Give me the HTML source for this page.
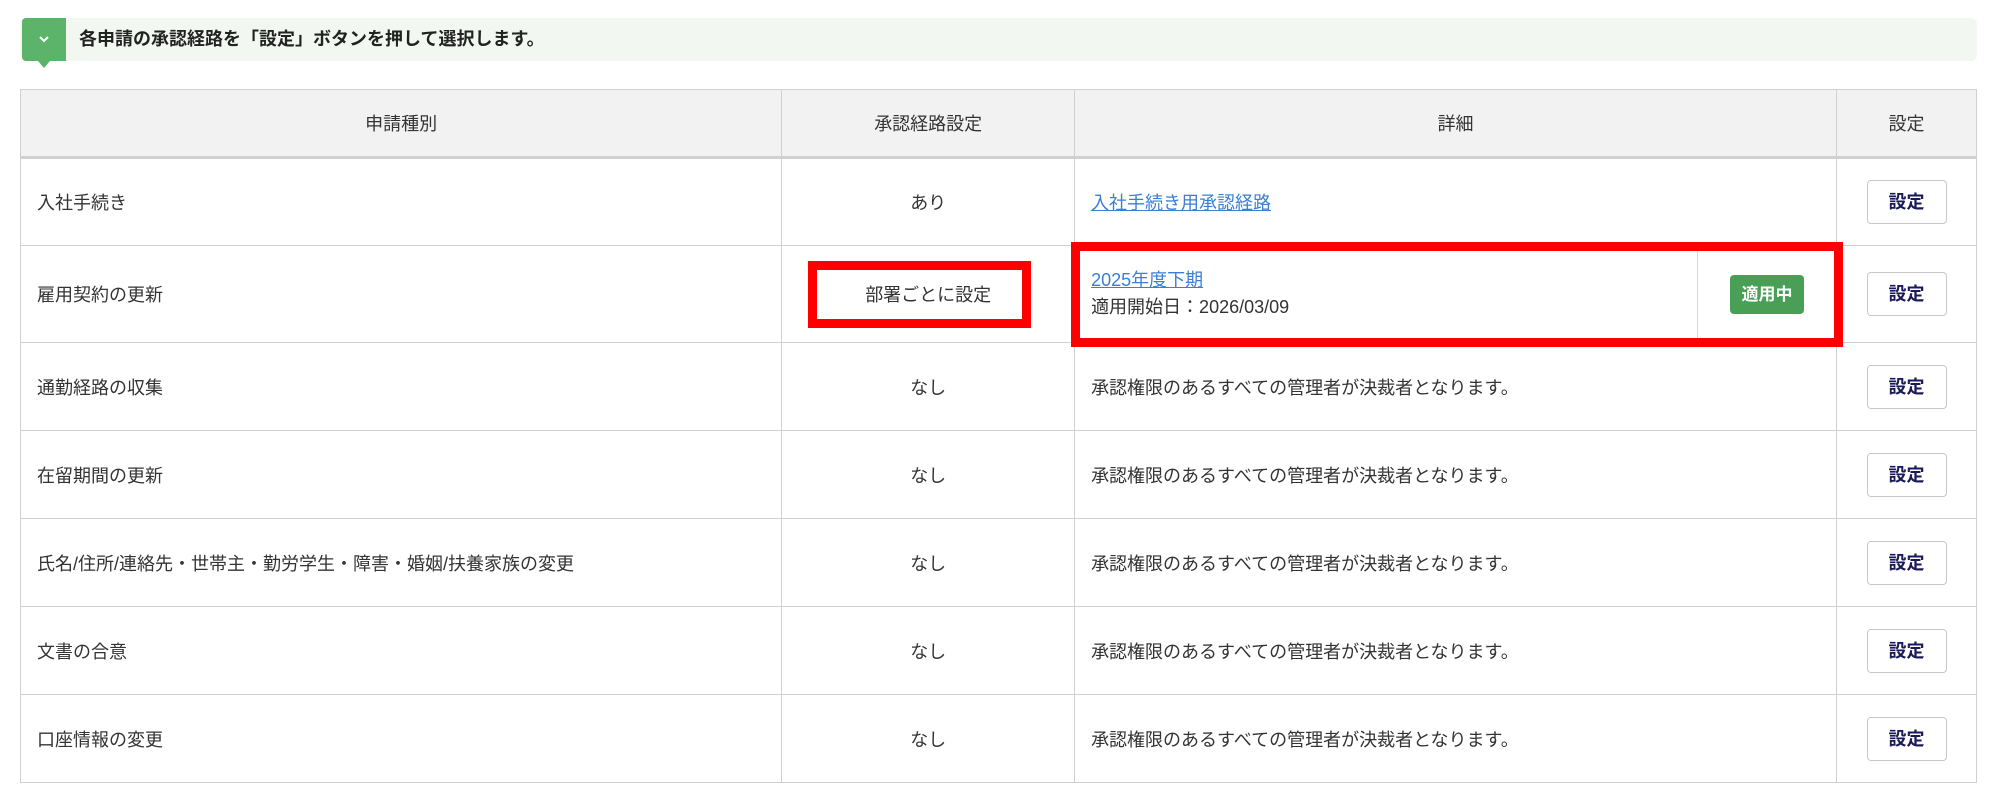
<!DOCTYPE html>
<html><head><meta charset="utf-8"><style>
*{box-sizing:border-box;margin:0;padding:0}
body{width:2000px;height:797px;background:#fff;font-family:"Liberation Sans","Noto Sans CJK JP",sans-serif;color:#333;position:relative;overflow:hidden}
.banner{position:absolute;left:20px;top:18px;width:1957px;height:43px;background:#f2f8f1;border-radius:6px}
.tab{position:absolute;left:22px;top:18px;width:44px;height:43px;background:#5cb36a;border-radius:4px 0 0 4px}
.tab:after{content:"";position:absolute;left:16px;top:43px;border-left:6px solid transparent;border-right:6px solid transparent;border-top:7px solid #5cb36a}
.tab svg{position:absolute;left:16px;top:16px}
.btitle{position:absolute;left:79px;top:18px;line-height:43px;font-size:18px;font-weight:bold;color:#222}
table{position:absolute;left:20px;top:89px;width:1957px;border-collapse:collapse;font-size:18px}
td,th{border:1px solid #d0d0d0;font-weight:normal}
th{background:#f2f2f2;height:68px;border-bottom:3px solid #d0d0d0}
td{padding:0 16px}
.c{text-align:center}
a{color:#3a7fd5;text-decoration:underline}
.btn{display:inline-block;width:80px;height:44px;line-height:42px;border:1px solid #c8c8c8;border-radius:4px;font-weight:bold;color:#1a1a5a;text-align:center;background:#fff}
.badge{display:inline-block;width:74px;height:39px;line-height:39px;background:#4a9f57;border-radius:4px;color:#fff;font-weight:bold;font-size:17px;text-align:center}
.red{position:absolute;border:9px solid #ff0000}
</style></head><body>
<div class="banner"></div>
<div class="tab"><svg width="12" height="10" viewBox="0 0 12 10"><path d="M2 3 L6 7 L10 3" stroke="#fff" stroke-width="2" fill="none"/></svg></div>
<div class="btitle">各申請の承認経路を「設定」ボタンを押して選択します。</div>
<table>
<colgroup><col style="width:762px"><col style="width:293px"><col style="width:762px"><col style="width:140px"></colgroup>
<tr><th>申請種別</th><th>承認経路設定</th><th>詳細</th><th>設定</th></tr>
<tr style="height:88px"><td>入社手続き</td><td class="c">あり</td><td><a>入社手続き用承認経路</a></td><td class="c"><span class="btn">設定</span></td></tr>
<tr style="height:97px"><td>雇用契約の更新</td><td class="c">部署ごとに設定</td><td style="padding:0;position:relative"><div style="display:flex;height:96px"><div style="flex:0 0 623px;padding:21px 16px 0;line-height:27px;border-right:1px solid #d8d8d8"><a>2025年度下期</a><br>適用開始日：2026/03/09</div><div style="flex:1;display:flex;align-items:center;justify-content:center"><span class="badge">適用中</span></div></div></td><td class="c"><span class="btn">設定</span></td></tr>
<tr style="height:88px"><td>通勤経路の収集</td><td class="c">なし</td><td>承認権限のあるすべての管理者が決裁者となります。</td><td class="c"><span class="btn">設定</span></td></tr>
<tr style="height:88px"><td>在留期間の更新</td><td class="c">なし</td><td>承認権限のあるすべての管理者が決裁者となります。</td><td class="c"><span class="btn">設定</span></td></tr>
<tr style="height:88px"><td>氏名/住所/連絡先・世帯主・勤労学生・障害・婚姻/扶養家族の変更</td><td class="c">なし</td><td>承認権限のあるすべての管理者が決裁者となります。</td><td class="c"><span class="btn">設定</span></td></tr>
<tr style="height:88px"><td>文書の合意</td><td class="c">なし</td><td>承認権限のあるすべての管理者が決裁者となります。</td><td class="c"><span class="btn">設定</span></td></tr>
<tr style="height:88px"><td>口座情報の変更</td><td class="c">なし</td><td>承認権限のあるすべての管理者が決裁者となります。</td><td class="c"><span class="btn">設定</span></td></tr>
</table>
<div class="red" style="left:808px;top:261px;width:223px;height:67px"></div>
<div class="red" style="left:1071px;top:242px;width:772px;height:105px"></div>
</body></html>
